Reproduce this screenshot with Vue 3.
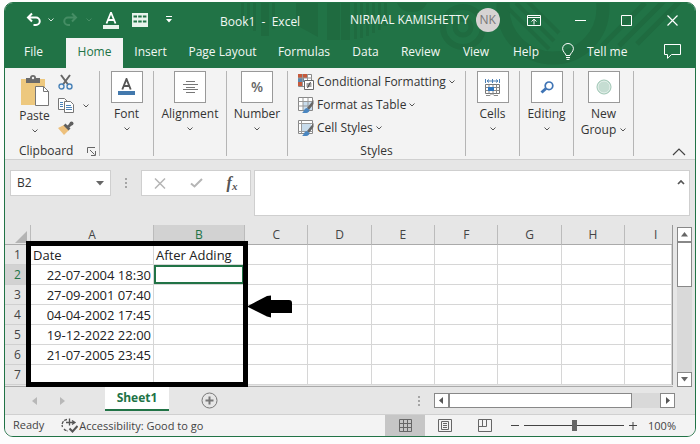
<script setup>
import { ref } from 'vue'

const tabs = ['File', 'Home', 'Insert', 'Page Layout', 'Formulas', 'Data', 'Review', 'View', 'Help']
const columns = ['A', 'B', 'C', 'D', 'E', 'F', 'G', 'H', 'I']
const rows = [
  ['Date', 'After Adding'],
  ['22-07-2004 18:30', ''],
  ['27-09-2001 07:40', ''],
  ['04-04-2002 17:45', ''],
  ['19-12-2022 22:00', ''],
  ['21-07-2005 23:45', ''],
  ['', ''],
]
const activeTab = ref('Home')
const cellName = ref('B2')
const formula = ref('')
const zoom = ref(50)
</script>

<template>
  <main class="window">
    <header class="top">
      <svg class="pattern" viewBox="0 0 690 65" preserveAspectRatio="xMaxYMin slice" aria-hidden="true">
        <g fill="#1f6b40">
          <path d="M236 0h3v20h-3zM242 0h3v24h-3zM248 0h3v28h-3zM256 0h8v33h-8zM267 0h3v26h-3zM291 0h22v34l-22-12z" />
          <path d="M322 0h13v37h-13zM336 0h9v37h-9zM349 0h3v36h-3zM355 0h3v35h-3zM361 0h3v33h-3zM367 0h3v30h-3zM373 0h3v27h-3zM379 0h3v23h-3z" />
          <path d="M392 0h30q-4 9-15 9t-15-9z" />
        </g>
        <g fill="none" stroke="#1f6b40">
          <circle cx="458" cy="24" r="20" stroke-width="6" />
          <circle cx="458" cy="24" r="8" stroke-width="5" />
          <circle cx="548" cy="5" r="50" stroke-width="13" />
          <path d="M500 2l44 44M511 0l38 38M522-2l32 32" stroke-width="4" />
          <path d="M597 43l43-43M614 43l46-46M632 41l44-44" stroke-width="5" />
        </g>
      </svg>

      <div class="titlebar">
        <div class="quick">
          <button aria-label="Undo"><svg width="16" height="16" viewBox="0 0 16 16" fill="none" stroke="#fff" stroke-width="2"><path d="M6 1.500L2 5.500l4 4M2.500 5.500h7.500a3.700 3.700 0 0 1 0 7.500H7.500" /></svg></button>
          <button aria-label="Undo history"><svg width="6" height="6" viewBox="0 0 6 6" fill="none" stroke="#d5e5db"><path d="M.5 1.500L3 4l2.500-2.500" /></svg></button>
          <button aria-label="Redo"><svg width="16" height="16" viewBox="0 0 16 16" fill="none" stroke="#458d64" stroke-width="2"><path d="M10 1.500l4 4-4 4M13.500 5.500H6A3.700 3.700 0 0 0 6 13h2" /></svg></button>
          <button aria-label="Redo history"><svg width="6" height="6" viewBox="0 0 6 6" fill="none" stroke="#458d64"><path d="M.5 1.500L3 4l2.500-2.500" /></svg></button>
          <button aria-label="Font colour"><svg width="16" height="17" viewBox="0 0 16 17"><path d="M3.500 11.500L8 .5l4.500 11M5 8h6" fill="none" stroke="#fff" stroke-width="1.800" /><path d="M0 13h16v4H0z" fill="#e9f3ec" /></svg></button>
          <button aria-label="Table"><svg width="16" height="14" viewBox="0 0 16 14"><path d="M0 0h16v14H0z" fill="#e9f3ec" /><path d="M1.500 3.500h13M1.500 8.500h13" stroke="#217346" stroke-width="2" stroke-dasharray="3.500 1.200" /></svg></button>
          <button aria-label="Customise toolbar"><svg width="6" height="8" viewBox="0 0 6 8" fill="#fff"><path d="M0 0h6v1H0zM0 3h6L3 6.500z" /></svg></button>
        </div>
        <h1>Book1&nbsp; -&nbsp; Excel</h1>
        <div class="account"><span>NIRMAL KAMISHETTY</span><span class="avatar">NK</span></div>
        <div class="controls">
          <button aria-label="Ribbon display options"><svg width="14" height="11" viewBox="0 0 14 11" fill="none" stroke="#fff"><path d="M.5.5h13v10H.5zM.5 2.500h13M7 9.500V4.500M4.500 6.500L7 4.200l2.500 2.300" /></svg></button>
          <button aria-label="Minimise"><svg width="11" height="11" viewBox="0 0 11 11" stroke="#fff"><path d="M0 5.500h11" /></svg></button>
          <button aria-label="Maximise"><svg width="11" height="11" viewBox="0 0 11 11" fill="none" stroke="#fff"><path d="M.5.5h10v10H.5z" /></svg></button>
          <button aria-label="Close"><svg width="11" height="11" viewBox="0 0 11 11" stroke="#fff" stroke-width="1.200"><path d="M.5.5l10 10M10.500.5l-10 10" /></svg></button>
        </div>
      </div>

      <nav class="tabs">
        <button v-for="t in tabs" :key="t" :class="{ active: t === activeTab }" @click="activeTab = t">{{ t }}</button>
        <button class="tell">
          <svg width="12" height="17" viewBox="0 0 12 17" fill="none" stroke="#fff"><path d="M4 12.500c0-2-3.400-3.500-3.400-6.800a5.400 5.200 0 0 1 10.800 0c0 3.300-3.400 4.800-3.400 6.800zM4 14.500h4M4.500 16.400h3" /></svg>
          <span>Tell me</span>
        </button>
        <button class="comments" aria-label="Comments"><svg width="17" height="15" viewBox="0 0 17 15" fill="none" stroke="#fff"><path d="M.5.5h16v10H7.500l-4 3.800v-3.800h-3z" /></svg></button>
      </nav>
    </header>

    <section class="ribbon" aria-label="Ribbon">
      <div class="group clipboard">
        <div class="clip-tools">
          <button class="stack paste">
            <svg width="29" height="32" viewBox="0 0 29 32"><path d="M1 5h24v26H1z" fill="#edc87e" /><path d="M6 9V4h4a3 3 0 0 1 6 0h4v5z" fill="#6b6b6b" /><circle cx="13" cy="4" r="1.200" fill="#f3f3f3" /><path d="M15.500 12.500h8l5 5v14h-13z" fill="#fff" stroke="#777" /><path d="M23.500 12.500v5h5" fill="none" stroke="#777" /></svg>
            <span>Paste</span>
            <svg class="chev" width="6" height="6" viewBox="0 0 6 6"><path d="M.5 1.500L3 4l2.500-2.500" /></svg>
          </button>
          <div class="mini">
            <button aria-label="Cut"><svg width="15" height="16" viewBox="0 0 15 16" fill="none"><path d="M3 1l7 9.500M12 1L5 10.500" stroke="#666" stroke-width="2" /><circle cx="3.500" cy="12.500" r="2.500" stroke="#4a83b8" stroke-width="1.400" /><circle cx="11.500" cy="12.500" r="2.500" stroke="#4a83b8" stroke-width="1.400" /></svg></button>
            <button class="copy" aria-label="Copy"><svg width="16" height="15" viewBox="0 0 16 15"><path d="M.5.5h6l3 3v8h-9z" fill="#fff" stroke="#777" /><path d="M2 4.500h3M2 6.500h3M2 8.500h3" stroke="#4a83b8" /><path d="M6.500 3.500h6l3 3v8h-9z" fill="#fff" stroke="#777" /><path d="M8 7.500h5M8 9.500h6M8 11.500h6" stroke="#4a83b8" /></svg><svg class="chev" width="6" height="6" viewBox="0 0 6 6"><path d="M.5 1.500L3 4l2.500-2.500" /></svg></button>
            <button aria-label="Format painter"><svg width="16" height="14" viewBox="0 0 16 14"><path d="M0 7l6-3 5 5-5 5z" fill="#edc07c" /><path d="M6.500 3.500l5 5M10 6l3-3" stroke="#5f5f5f" stroke-width="2.800" /><circle cx="13.500" cy="2.500" r="2" fill="#5f5f5f" /></svg></button>
          </div>
        </div>
        <div class="caption"><span>Clipboard</span><button aria-label="Clipboard settings"><svg width="9" height="9" viewBox="0 0 9 9" fill="none" stroke="#666"><path d="M.5 6V.5H8M3 3l4.500 4.500M8.500 4v4.500H4" /></svg></button></div>
      </div>

      <div class="group font">
        <button class="stack">
          <span class="tile"><svg width="17" height="18" viewBox="0 0 17 18"><path d="M4.300 11.500L8.500 1l4.200 10.500M5.700 8h5.600" fill="none" stroke="#555" stroke-width="1.900" /><path d="M0 13h17v4H0z" fill="#4379ad" /></svg></span>
          <span>Font</span><svg class="chev" width="6" height="6" viewBox="0 0 6 6"><path d="M.5 1.500L3 4l2.500-2.500" /></svg>
        </button>
      </div>
      <div class="group align">
        <button class="stack">
          <span class="tile"><svg width="15" height="12" viewBox="0 0 15 12" stroke="#777"><path d="M3 .5h9M0 3.500h15M3 6.500h9M0 8.500h15M3 11.500h9" /></svg></span>
          <span>Alignment</span><svg class="chev" width="6" height="6" viewBox="0 0 6 6"><path d="M.5 1.500L3 4l2.500-2.500" /></svg>
        </button>
      </div>
      <div class="group number">
        <button class="stack">
          <span class="tile percent">%</span>
          <span>Number</span><svg class="chev" width="6" height="6" viewBox="0 0 6 6"><path d="M.5 1.500L3 4l2.500-2.500" /></svg>
        </button>
      </div>

      <div class="group styles">
        <div class="style-list">
          <button>
            <svg width="16" height="16" viewBox="0 0 16 16"><path d="M.5.5h13v12H.5z" fill="#fff" stroke="#888" /><path d="M0 0h9v4H0zM0 8h5v4H0z" fill="#c65a3c" /><path d="M0 4h6v4H0z" fill="#5d87ad" /><path d="M4.500 0v12M9.500 0v8M0 4h14" stroke="#999" /><path d="M6.500 6.500h9v9h-9z" fill="#fff" stroke="#666" /><path d="M8.500 10h5M8.500 12h5M12.500 8l-3 6" stroke="#444" /></svg>
            Conditional Formatting<svg class="chev" width="6" height="6" viewBox="0 0 6 6"><path d="M.5 1.500L3 4l2.500-2.500" /></svg>
          </button>
          <button>
            <svg width="16" height="16" viewBox="0 0 16 16"><path d="M.5.5h14v13H.5z" fill="#fff" stroke="#888" /><path d="M5 4h9v9H5z" fill="#c8dcec" /><path d="M.5 4.500h14M.5 9h14M5 .5v13M10 .5v13" stroke="#999" /><path d="M15.500 3v4l-4.500 6-2-2z" fill="#666" /><path d="M4 16c2-1 2-5 5-5l2.500 2c0 3-4 3.500-7.500 3z" fill="#4a86c0" /></svg>
            Format as Table<svg class="chev" width="6" height="6" viewBox="0 0 6 6"><path d="M.5 1.500L3 4l2.500-2.500" /></svg>
          </button>
          <button>
            <svg width="16" height="16" viewBox="0 0 16 16"><path d="M.5.5h14v13H.5z" fill="#fff" stroke="#888" /><path d="M4 4h9v7H4z" fill="#c8dcec" /><path d="M.5 3.500h14M3.500.5v13M.5 11.500h14" stroke="#999" /><path d="M15.500 3v4l-4.500 6-2-2z" fill="#666" /><path d="M4 16c2-1 2-5 5-5l2.500 2c0 3-4 3.500-7.500 3z" fill="#4a86c0" /></svg>
            Cell Styles<svg class="chev" width="6" height="6" viewBox="0 0 6 6"><path d="M.5 1.500L3 4l2.500-2.500" /></svg>
          </button>
        </div>
        <div class="caption"><span>Styles</span></div>
      </div>

      <div class="group cells">
        <button class="stack">
          <span class="tile"><svg width="16" height="17" viewBox="0 0 16 17"><path d="M.5 0v4M14.500 0v4M2 2h11M4 .5L2 2l2 1.500M11 .5L13 2l-2 1.500M7.500 0v4" fill="none" stroke="#4a7fb5" /><path d="M.5 5.500h14v9H.5z" fill="#fff" stroke="#777" /><path d="M.5 8.500h14M.5 11.500h14M4 5.500v9M8 5.500v9M11.500 5.500v9M1 16.500h4l2-2 2 2h4" fill="none" stroke="#888" /><path d="M3 8h6v4H3z" fill="#2f76bf" /></svg></span>
          <span>Cells</span><svg class="chev" width="6" height="6" viewBox="0 0 6 6"><path d="M.5 1.500L3 4l2.500-2.500" /></svg>
        </button>
      </div>
      <div class="group editing">
        <button class="stack">
          <span class="tile"><svg width="14" height="13" viewBox="0 0 14 13" fill="none" stroke="#3f74b5"><circle cx="9" cy="4.800" r="3.800" stroke-width="1.700" /><path d="M6 7.500L1.500 11.500" stroke-width="3" /></svg></span>
          <span>Editing</span><svg class="chev" width="6" height="6" viewBox="0 0 6 6"><path d="M.5 1.500L3 4l2.500-2.500" /></svg>
        </button>
      </div>
      <div class="group newgroup">
        <button class="stack">
          <span class="tile"><svg width="16" height="16" viewBox="0 0 16 16"><circle cx="8" cy="8" r="7" fill="#c5ddd2" stroke="#9cc4b2" /><circle cx="8" cy="8" r="5.900" fill="none" stroke="#e2efe9" /></svg></span>
          <span>New</span>
          <span>Group <svg class="chev" width="6" height="6" viewBox="0 0 6 6"><path d="M.5 1.500L3 4l2.500-2.500" /></svg></span>
        </button>
      </div>
      <button class="collapse" aria-label="Collapse ribbon"><svg width="14" height="8" viewBox="0 0 14 8" fill="none" stroke="#444" stroke-width="1.200"><path d="M1 7l6-6 6 6" /></svg></button>
    </section>

    <section class="formula-row">
      <div class="namebox">
        <input v-model="cellName" aria-label="Name box">
        <button aria-label="Named ranges"><svg width="8" height="5" viewBox="0 0 8 5" fill="#666"><path d="M0 0h8L4 4.500z" /></svg></button>
      </div>
      <svg class="dots" width="2" height="10" viewBox="0 0 2 10" fill="#a5a5a5"><path d="M0 0h2v2H0zM0 4h2v2H0zM0 8h2v2H0z" /></svg>
      <div class="fx">
        <button aria-label="Cancel"><svg width="12" height="11" viewBox="0 0 12 11" stroke="#b5b5b5" stroke-width="1.500"><path d="M1 .5l10 10M11 .5l-10 10" /></svg></button>
        <button aria-label="Enter"><svg width="13" height="10" viewBox="0 0 13 10" fill="none" stroke="#b5b5b5" stroke-width="2"><path d="M1 5.500l3.500 3L12 1" /></svg></button>
        <button class="fn" aria-label="Insert function"><i>f</i><sub>x</sub></button>
      </div>
      <div class="formula">
        <textarea v-model="formula" aria-label="Formula bar"></textarea>
        <button aria-label="Collapse formula bar"><svg width="8" height="6" viewBox="0 0 8 6" fill="none" stroke="#555" stroke-width="1.700"><path d="M1 5l3-3 3 3" /></svg></button>
      </div>
    </section>

    <section class="sheet-area">
      <div class="sheet">
        <table>
          <colgroup>
            <col class="c-row"><col class="c-a"><col class="c-b">
            <col v-for="n in 6" :key="n" class="c-std"><col>
          </colgroup>
          <thead>
            <tr>
              <th class="corner" scope="col" aria-label="Select all"><svg width="12" height="12" viewBox="0 0 12 12" fill="#b4b4b4"><path d="M12 0v12H0z" /></svg></th>
              <th v-for="c in columns" :key="c" scope="col" :class="{ sel: c === 'B' }">{{ c }}</th>
            </tr>
          </thead>
          <tbody>
            <tr v-for="(r, i) in rows" :key="i">
              <th scope="row" :class="{ sel: i === 1 }">{{ i + 1 }}</th>
              <td :class="{ date: i > 0 }">{{ r[0] }}</td>
              <td :class="{ current: i === 1 }">{{ r[1] }}</td>
              <td v-for="n in 7" :key="n"></td>
            </tr>
          </tbody>
        </table>
        <div class="highlight"></div>
        <svg class="arrow" width="46" height="23" viewBox="0 0 46 23"><path d="M0 11.500L20 1l4-.5V5h18q3 0 3 3v10H24v4.500l-4-1z" fill="#000" /></svg>
      </div>
      <div class="vscroll">
        <button aria-label="Scroll up"><svg width="7" height="5" viewBox="0 0 7 5" fill="#666"><path d="M0 4.500L3.500 0 7 4.500z" /></svg></button>
        <span class="vthumb"></span>
        <button class="end" aria-label="Scroll down"><svg width="7" height="5" viewBox="0 0 7 5" fill="#666"><path d="M0 0h7L3.500 4.500z" /></svg></button>
      </div>
    </section>

    <section class="sheet-tabs">
      <button aria-label="Previous sheet"><svg width="5" height="8" viewBox="0 0 5 8" fill="#b8b8b8"><path d="M5 0v8L0 4z" /></svg></button>
      <button aria-label="Next sheet"><svg width="5" height="8" viewBox="0 0 5 8" fill="#b8b8b8"><path d="M0 0v8l5-4z" /></svg></button>
      <button class="sheet-tab">Sheet1</button>
      <button class="add" aria-label="New sheet"><svg width="17" height="17" viewBox="0 0 17 17" fill="none" stroke="#777"><circle cx="8.500" cy="8.500" r="7.500" /><path d="M8.500 4.500v8M4.500 8.500h8" stroke-width="2" /></svg></button>
      <svg class="dots" width="2" height="10" viewBox="0 0 2 10" fill="#a5a5a5"><path d="M0 0h2v2H0zM0 4h2v2H0zM0 8h2v2H0z" /></svg>
      <div class="hscroll">
        <button aria-label="Scroll left"><svg width="4" height="7" viewBox="0 0 4 7" fill="#555"><path d="M4 0v7L0 3.500z" /></svg></button>
        <span class="hthumb"></span>
        <button class="end" aria-label="Scroll right"><svg width="4" height="7" viewBox="0 0 4 7" fill="#555"><path d="M0 0v7l4-3.500z" /></svg></button>
      </div>
    </section>

    <footer class="status">
      <span class="ready">Ready</span>
      <button class="access">
        <svg width="17" height="15" viewBox="0 0 17 15" fill="none" stroke="#555" stroke-width="1.300"><path d="M6 1.500A5.500 5.500 0 0 0 1.500 9M3 11a5.500 5.500 0 0 0 4 2" stroke-dasharray="3 1" /><path d="M8.500.5v7M5 4.500h9M11 2.500l3 2-3 2" /><path d="M8.500 10.500l3 3 5-5.500" stroke-width="2" /></svg>
        Accessibility: Good to go
      </button>
      <div class="views">
        <button class="on" aria-label="Normal view"><svg width="13" height="13" viewBox="0 0 13 13" fill="none" stroke="#666"><path d="M.5.5h12v12H.5zM.5 4.500h12M.5 8.500h12M4.500.5v12M8.500.5v12" /></svg></button>
        <button aria-label="Page layout view"><svg width="14" height="13" viewBox="0 0 14 13" fill="none" stroke="#666"><path d="M.5.5h13v12H.5zM3.500 2.500h7v8h-7zM5 4.500h4M5 6.500h4M5 8.500h4" /></svg></button>
        <button aria-label="Page break view"><svg width="14" height="13" viewBox="0 0 14 13" fill="none" stroke="#666"><path d="M.5.5h13v12H.5zM.5 7.500h8v-7M4.500.5v7" /></svg></button>
      </div>
      <div class="zoom">
        <button aria-label="Zoom out"><svg width="8" height="8" viewBox="0 0 8 8" stroke="#444"><path d="M0 3.500h8" /></svg></button>
        <input v-model="zoom" type="range" min="0" max="100" aria-label="Zoom">
        <button aria-label="Zoom in"><svg width="8" height="8" viewBox="0 0 8 8" stroke="#444"><path d="M0 3.500h8M4 0v8" /></svg></button>
        <span>100%</span>
      </div>
    </footer>
  </main>
</template>

<style>
body { background: #fdfdfd; }
</style>

<style scoped>
* { box-sizing: border-box; }
.window {
  margin: 2px 4px 0;
  border: 1px solid #217346;
  border-radius: 9px;
  overflow: hidden;
  background: #e6e6e6;
  color: #333;
  font: 12px/16px "Open Sans", "Noto Sans", sans-serif;
}
button, input, textarea { font: inherit; color: inherit; border: 0; padding: 0; margin: 0; background: none; outline: 0; }
button { display: flex; align-items: center; justify-content: center; white-space: nowrap; }
svg { display: block; flex: none; }
.chev { fill: none; stroke: #555; }

.top { position: relative; background: #217346; color: #f2f8f4; }
.pattern { position: absolute; top: 0; right: 0; width: 100%; height: 100%; }
.titlebar { position: relative; display: grid; grid-template-columns: 215px 130px 1fr auto; align-items: center; height: 34px; }
.quick { display: flex; align-items: center; padding-left: 21px; }
.quick button:nth-child(2) { margin-left: 6px; }
.quick button:nth-child(3) { margin-left: 8px; }
.quick button:nth-child(4) { margin-left: 8px; }
.quick button:nth-child(5) { margin-left: 11px; }
.quick button:nth-child(6) { margin-left: 13px; }
.quick button:nth-child(7) { margin-left: 18px; }
h1 { margin: 0; padding-top: 4px; font-size: 12px; font-weight: 400; white-space: nowrap; }
.account { display: flex; align-items: center; gap: 7px; white-space: nowrap; }
.avatar { display: grid; place-items: center; width: 24px; height: 24px; border-radius: 50%; background: #d6d3d3; color: #777; }
.controls { display: flex; }
.controls button { width: 46px; height: 30px; }
.tabs { position: relative; display: grid; grid-template-columns: 61px 57px 55px 89px 74px 49px 61px 50px 50px 1fr 46px; height: 31px; }
.tabs button { padding-bottom: 2px; }
.tabs button:first-child { padding-right: 4px; }
.tabs button.active { background: #f3f3f3; color: #217346; margin-top: 1px; }
.tabs .tell { justify-content: flex-start; gap: 13px; padding-left: 11px; }

.ribbon { display: flex; min-height: 92px; padding: 3px 0; background: #f3f3f3; border-bottom: 1px solid #d0d0d0; }
.group { flex: none; display: flex; flex-direction: column; justify-content: space-between; height: 85px; border-right: 1px solid #b5b5b5; }
.clipboard { width: 95px; }
.font { width: 54px; }
.align { width: 73px; }
.number { width: 61px; }
.styles { width: 178px; }
.cells, .editing { width: 54px; }
.newgroup { width: 60px; }
.stack { flex-direction: column; justify-content: flex-start; width: 100%; }
.stack > span:not(.tile) { display: flex; align-items: center; gap: 4px; }
.stack .tile { display: grid; place-items: center; width: 32px; height: 32px; margin-bottom: 3px; background: #fff; border: 1px solid #999; }
.stack > .chev { margin-top: 4px; }
.percent { font-size: 14px; font-weight: 600; color: #666; }
.clip-tools { display: flex; gap: 5px; padding-top: 3px; }
.stack.paste { width: 46px; padding-left: 13px; }
.paste span { margin-top: 2px; }
.mini { display: flex; flex-direction: column; align-items: flex-start; gap: 8px; padding-left: 2px; }
.copy { gap: 9px; }
.caption { display: flex; justify-content: center; align-items: center; height: 10px; }
.clipboard .caption { justify-content: space-between; padding: 0 3px 0 14px; }
.style-list { display: flex; flex-direction: column; align-items: flex-start; gap: 7px; padding: 3px 0 0 10px; }
.style-list button { gap: 3px; height: 16px; }
.collapse { margin-left: auto; align-self: flex-end; padding: 0 9px 0 0; }

.formula-row { display: flex; align-items: flex-start; height: 65px; padding: 10px 5px 9px; }
.namebox, .fx, .formula { display: flex; background: #fff; border: 1px solid #cfcfcf; }
.namebox { width: 101px; height: 26px; }
.namebox input { flex: 1; min-width: 0; padding-left: 6px; }
.namebox button { width: 20px; }
.formula-row .dots { margin: 8px 14px 0; }
.fx { width: 110px; height: 26px; justify-content: space-around; }
.fx button { width: 36px; }
.fn { font-family: "Liberation Serif", serif; font-size: 16px; font-weight: 700; color: #555; }
.fn sub { font-size: 11px; font-style: italic; line-height: 8px; margin-top: 6px; }
.formula { flex: 1; height: 46px; margin-left: 3px; }
.formula textarea { flex: 1; min-width: 0; resize: none; }
.formula button { width: 16px; height: 22px; }

.sheet-area { display: flex; }
.sheet { position: relative; flex: 1; min-width: 0; height: 162px; border-bottom: 1px solid #aaa; }
.sheet table { width: 100%; table-layout: fixed; border-collapse: separate; border-spacing: 0; background: #fff; border-right: 1px solid #999; }
.c-row { width: 26px; }
.c-a { width: 123px; }
.c-b { width: 91px; }
.c-std { width: 9.5%; }
th, td { height: 20px; padding: 0; font-weight: 400; line-height: 18px; white-space: nowrap; }
th { background: #e6e6e6; color: #444; border-right: 1px solid #bbb; border-bottom: 1px solid #d0d0d0; text-align: center; }
thead th { border-bottom-color: #aaa; }
thead th:last-child { padding-left: 14px; border-right: 0; }
th.sel { background: #d2d2d2; color: #217346; }
.corner svg { margin: 4px 0 0 10px; }
td { border-right: 1px solid #d6d6d6; border-bottom: 1px solid #d6d6d6; color: #222; font-size: 13px; padding: 0 2px; overflow: hidden; }
td.date { text-align: right; }
td.current { box-shadow: inset 0 0 0 2px #217346; }
.highlight { position: absolute; left: 21px; top: 16px; width: 222px; height: 146px; border: 5px solid #000; }
.arrow { position: absolute; left: 242px; top: 70px; }
.vscroll { display: flex; flex-direction: column; width: 15px; height: 160px; margin: 2px 3px 0 4px; background: #d9d9d9; }
.vscroll button, .hscroll button { flex: none; width: 15px; height: 15px; background: #fff; border: 1px solid #888; }
.vthumb { height: 45px; background: #fff; border: 1px solid #888; }
.vscroll .end { margin-top: auto; }

.sheet-tabs { display: flex; align-items: center; height: 28px; border-bottom: 1px solid #d0d0d0; }
.sheet-tabs > button:first-child { margin: 0 23px 0 27px; }
.sheet-tabs .sheet-tab { align-self: flex-start; width: 64px; height: 24px; margin-left: 40px; background: #fff; color: #217346; font-weight: 700; border-bottom: 2px solid #217346; }
.add { margin-left: 32px; }
.sheet-tabs .dots { margin-left: auto; }
.hscroll { display: flex; width: 35%; height: 15px; margin: 0 20px 0 14px; background: #d9d9d9; }
.hthumb { width: 76%; background: #fff; border: 1px solid #888; }
.hscroll .end { margin-left: auto; }

.status { display: flex; align-items: stretch; height: 21px; background: #f3f3f3; font-size: 11px; color: #444; }
.ready { padding: 2px 0 0 8px; }
.access { gap: 1px; margin-left: 17px; }
.views { display: flex; margin-left: auto; }
.views button { width: 40px; }
.views .on { background: #c6c6c6; }
.zoom { display: flex; align-items: center; gap: 5px; padding: 0 19px 0 6px; }
.zoom input { width: 100px; height: 12px; appearance: none; background: linear-gradient(#444, #444) center / 100% 1px no-repeat; }
.zoom input::-webkit-slider-thumb { appearance: none; width: 5px; height: 11px; background: #666; }
.zoom span { margin-left: 6px; }
</style>
